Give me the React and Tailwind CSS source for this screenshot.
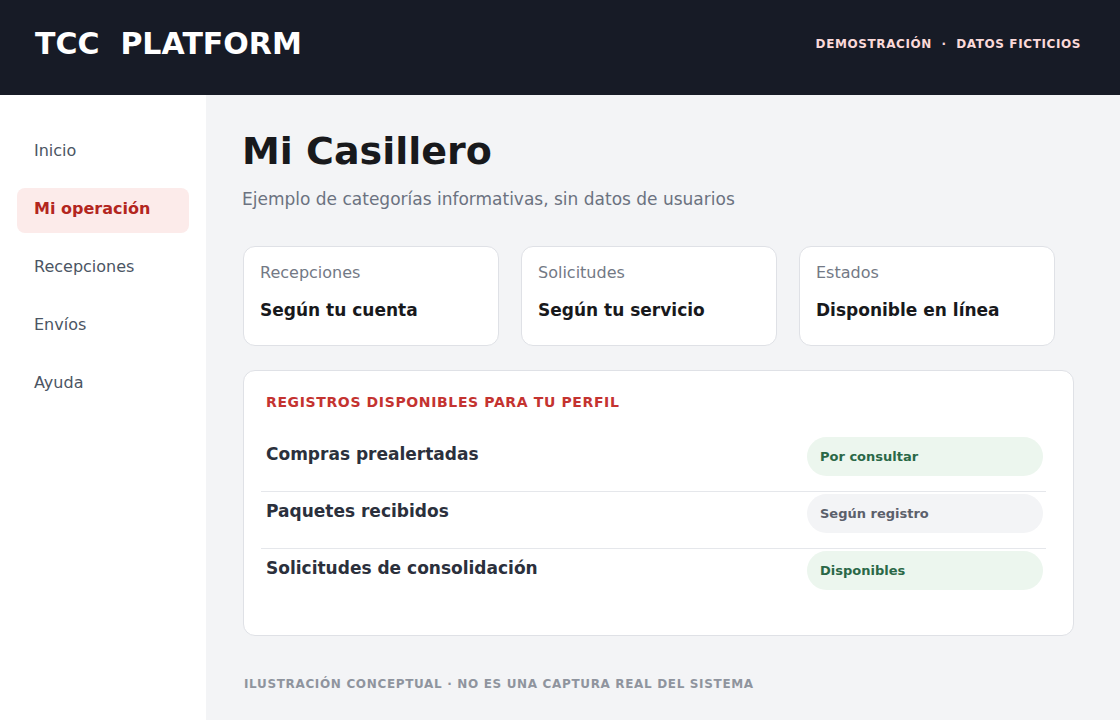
const font = { fontFamily: '"DejaVu Sans", "Noto Sans", sans-serif' }

const navItems = ["Inicio", "Mi operación", "Recepciones", "Envíos", "Ayuda"]

const stats = [
    { label: "Recepciones", value: "Según tu cuenta" },
    { label: "Solicitudes", value: "Según tu servicio" },
    { label: "Estados", value: "Disponible en línea" },
]

const rows = [
    { name: "Compras prealertadas", status: "Por consultar", tone: "green" },
    { name: "Paquetes recibidos", status: "Según registro", tone: "gray" },
    { name: "Solicitudes de consolidación", status: "Disponibles", tone: "green" },
]

function Header() {
    return (
        <header className="h-[95px] bg-[#171b26] flex items-center justify-between pl-[35px] pr-[39px] pb-[8px]">
            <div className="text-white font-bold text-[30px] whitespace-pre">TCC  PLATFORM</div>
            <div className="text-[#fbd9d9] font-bold text-[12px] tracking-[0.05em] whitespace-pre">
                DEMOSTRACIÓN  ·  DATOS FICTICIOS
            </div>
        </header>
    )
}

function Sidebar() {
    return (
        <aside className="w-[206px] shrink-0 bg-white pt-[35px] px-[17px] flex flex-col gap-[13px]">
            {navItems.map((item) =>
                item === "Mi operación" ? (
                    <div
                        key={item}
                        className="h-[45px] rounded-[8px] bg-[#fcebea] pl-[17px] pt-[10px] text-[16px] leading-[21px] font-bold text-[#b3261e]"
                    >
                        {item}
                    </div>
                ) : (
                    <div key={item} className="h-[45px] pl-[17px] pt-[10px] text-[16px] leading-[21px] text-[#4b5563]">
                        {item}
                    </div>
                )
            )}
        </aside>
    )
}

function StatCard({ label, value }) {
    return (
        <div className="h-[100px] bg-white border border-[#dfe1e6] rounded-[12px] px-[16px] pt-[15px]">
            <div className="text-[16px] leading-[22px] text-[#737985]">{label}</div>
            <div className="mt-[14px] text-[17px] leading-[24px] font-bold text-[#18191c]">{value}</div>
        </div>
    )
}

function Pill({ status, tone }) {
    //### green = available, gray = depends on record
    const cls =
        tone === "green"
            ? "bg-[#ecf6ee] text-[#2a6847]"
            : "bg-[#f3f4f6] text-[#5b606b]"
    return (
        <div className={"w-[236px] h-[39px] rounded-full flex items-center pl-[13px] text-[13px] font-bold " + cls}>
            {status}
        </div>
    )
}

export default function App() {
    return (
        <div className="w-[1120px] h-[720px] flex flex-col overflow-hidden" style={font}>
            <Header />
            <div className="flex flex-1">
                <Sidebar />
                <main className="flex-1 bg-[#f3f4f6] pl-[36px] pt-[32px]">
                    <h1 className="text-[38px] leading-[48px] font-bold text-[#18191c]">Mi Casillero</h1>
                    <p className="mt-[12px] text-[17px] leading-[24px] text-[#6b7280]">
                        Ejemplo de categorías informativas, sin datos de usuarios
                    </p>

                    <div className="mt-[35px] ml-[1px] w-[812px] grid grid-cols-3 gap-[22px]">
                        {stats.map((s) => (
                            <StatCard key={s.label} {...s} />
                        ))}
                    </div>

                    <section className="mt-[24px] ml-[1px] w-[831px] h-[266px] bg-white border border-[#dfe1e6] rounded-[12px] pt-[22px] pl-[17px] pr-[27px]">
                        <div className="pl-[5px] text-[14px] leading-[18px] font-bold tracking-[0.045em] text-[#c43330]">
                            REGISTROS DISPONIBLES PARA TU PERFIL
                        </div>
                        <div className="mt-[24px]">
                            {rows.map((r, i) => (
                                <div
                                    key={r.name}
                                    className={
                                        "flex items-start justify-between pl-[5px] pr-[3px] pt-[2px] pb-[15px] " +
                                        (i < rows.length - 1 ? "border-b border-[#e5e7eb]" : "")
                                    }
                                >
                                    <div className="mt-[5px] text-[17px] leading-[24px] font-bold text-[#2b303c]">
                                        {r.name}
                                    </div>
                                    <Pill status={r.status} tone={r.tone} />
                                </div>
                            ))}
                        </div>
                    </section>

                    <div className="mt-[40px] pl-[2px] text-[12px] leading-[16px] font-bold tracking-[0.055em] text-[#8f949e]">
                        ILUSTRACIÓN CONCEPTUAL · NO ES UNA CAPTURA REAL DEL SISTEMA
                    </div>
                </main>
            </div>
        </div>
    )
}
